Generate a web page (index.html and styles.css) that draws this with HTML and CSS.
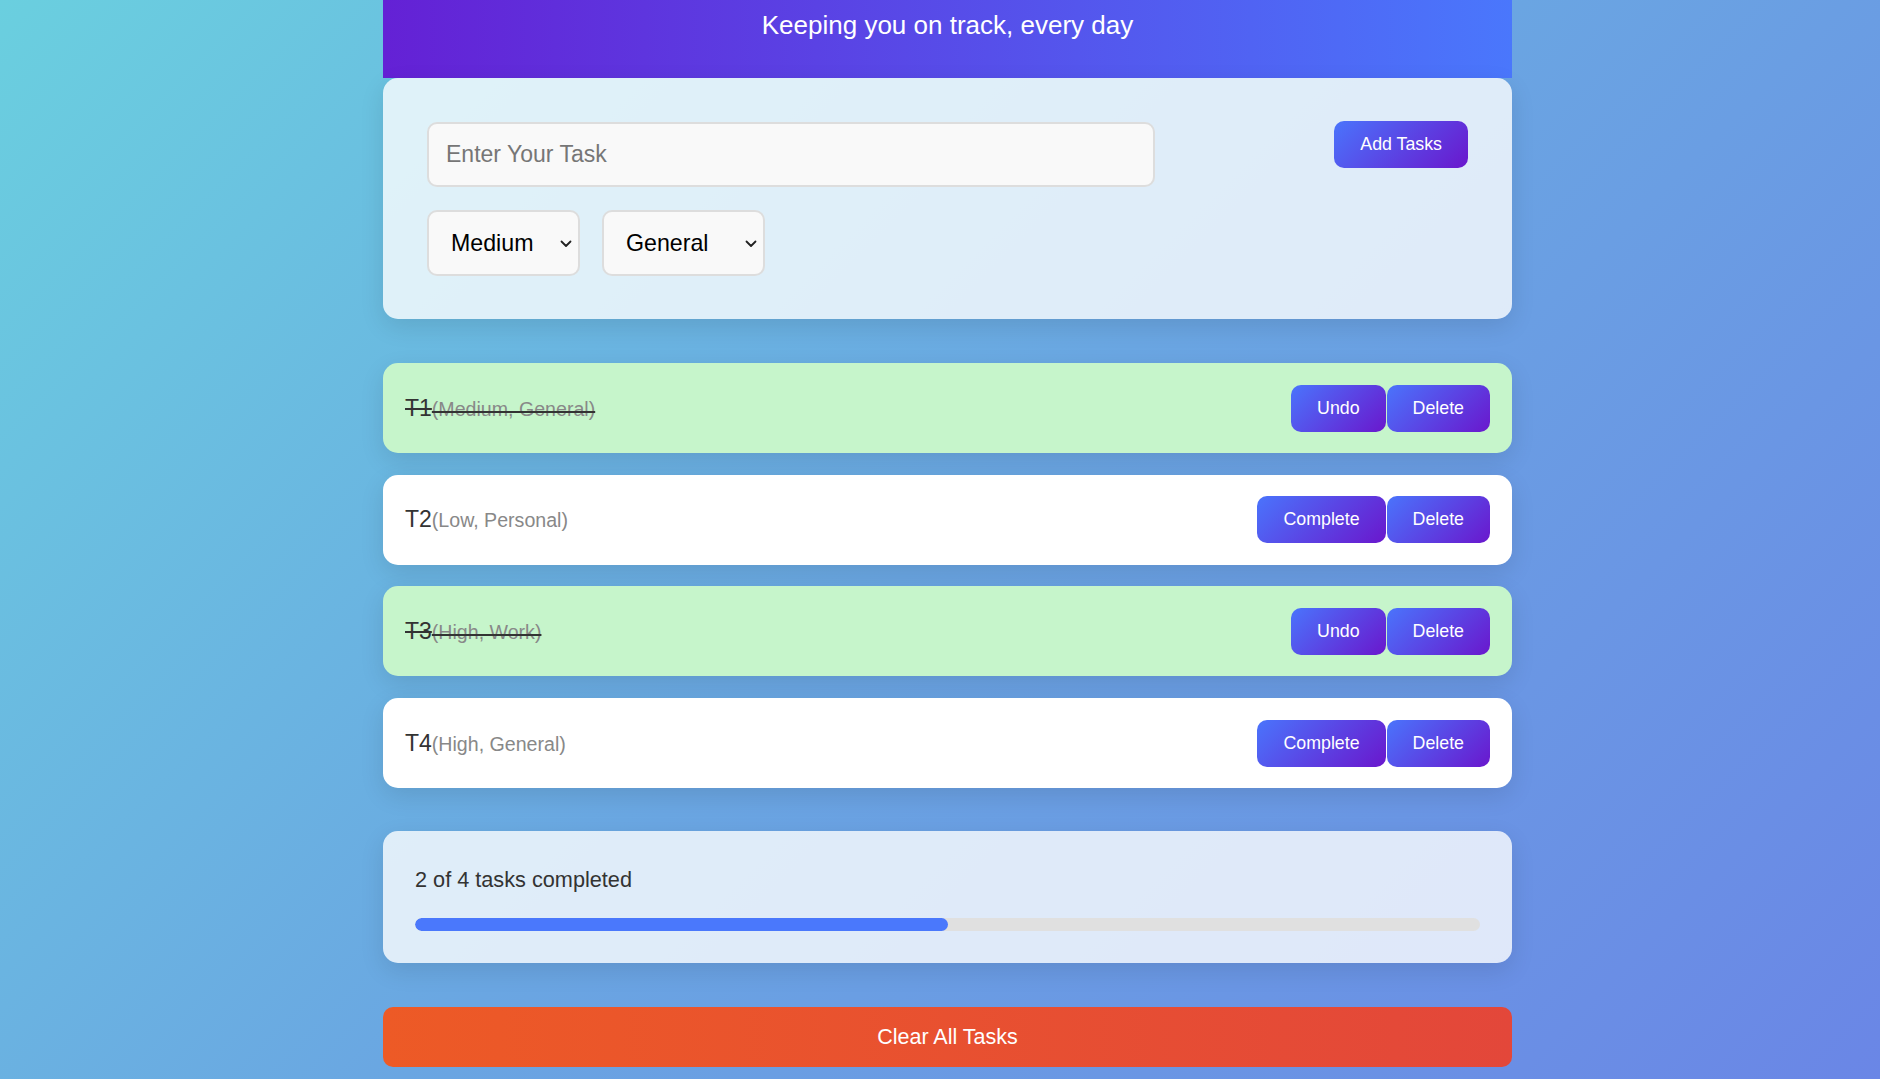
FILE: index.html
```html
<!DOCTYPE html>
<html lang="en">
<head>
<meta charset="utf-8">
<title>Task Tracker</title>
<link rel="stylesheet" href="styles.css">
</head>
<body>
<div class="container">
  <header class="app-header">
    <p class="tagline">Keeping you on track, every day</p>
  </header>

  <section class="card input-card">
    <div class="input-row">
      <input class="task-input" type="text" placeholder="Enter Your Task">
      <button class="btn add-btn">Add Tasks</button>
    </div>
    <div class="select-row">
      <div class="select-wrap">
        <select class="select select-priority">
          <option>Low</option>
          <option selected>Medium</option>
          <option>High</option>
        </select>
        <svg class="chevron" width="12" height="8" viewBox="0 0 12 8" aria-hidden="true"><path d="M1.5 1.5 L6 6 L10.5 1.5" fill="none" stroke="#222" stroke-width="1.8" stroke-linecap="round" stroke-linejoin="round"/></svg>
      </div>
      <div class="select-wrap">
        <select class="select select-category">
          <option selected>General</option>
          <option>Work</option>
          <option>Personal</option>
        </select>
        <svg class="chevron" width="12" height="8" viewBox="0 0 12 8" aria-hidden="true"><path d="M1.5 1.5 L6 6 L10.5 1.5" fill="none" stroke="#222" stroke-width="1.8" stroke-linecap="round" stroke-linejoin="round"/></svg>
      </div>
    </div>
  </section>

  <ul class="task-list">
    <li class="task completed">
      <span class="task-text">T1<span class="task-meta">(Medium, General)</span></span>
      <div class="task-actions"><button class="btn">Undo</button><button class="btn">Delete</button></div>
    </li>
    <li class="task">
      <span class="task-text">T2<span class="task-meta">(Low, Personal)</span></span>
      <div class="task-actions"><button class="btn">Complete</button><button class="btn">Delete</button></div>
    </li>
    <li class="task completed">
      <span class="task-text">T3<span class="task-meta">(High, Work)</span></span>
      <div class="task-actions"><button class="btn">Undo</button><button class="btn">Delete</button></div>
    </li>
    <li class="task">
      <span class="task-text">T4<span class="task-meta">(High, General)</span></span>
      <div class="task-actions"><button class="btn">Complete</button><button class="btn">Delete</button></div>
    </li>
  </ul>

  <section class="card progress-card">
    <p class="progress-text">2 of 4 tasks completed</p>
    <div class="progress-track"><div class="progress-fill" style="width:50%"></div></div>
  </section>

  <button class="clear-btn">Clear All Tasks</button>
</div>
</body>
</html>
```

FILE: styles.css
```css
html {
  min-height: 100%;
  background: linear-gradient(135deg, #6acfdf 0%, #6aa6e2 50%, #6a86e6 100%);
}

body {
  margin: 0;
  padding: 0 0 0 15px;
  font-family: "Liberation Sans", Arial, sans-serif;
  color: #333;
}

.container {
  width: 1129px;
  margin: 0 auto;
}

.app-header {
  background: linear-gradient(90deg, #6421d5 0%, #4a77fc 100%);
  padding: 10px 0 38px;
  text-align: center;
  color: #fff;
}

.tagline {
  margin: 0;
  font-size: 26px;
  line-height: 30px;
}

.card {
  background: rgba(255, 255, 255, 0.79);
  border-radius: 15px;
  box-shadow: 0 8px 24px rgba(0, 0, 0, 0.1);
}

.input-card {
  padding: 44px 44px 43px;
}

.input-row {
  display: flex;
  justify-content: space-between;
  align-items: flex-start;
}

.task-input {
  width: 728px;
  height: 65px;
  box-sizing: border-box;
  border: 2px solid #ddd;
  border-radius: 10px;
  background: #f9f9f9;
  padding: 0 17px;
  font-family: inherit;
  font-size: 23px;
  color: #333;
  outline: none;
}

.task-input::placeholder {
  color: #767676;
}

.btn {
  height: 47px;
  padding: 0 26px;
  border: none;
  border-radius: 10px;
  background: linear-gradient(135deg, #4a74fc 0%, #6a17cd 100%);
  color: #fff;
  font-family: inherit;
  font-size: 17.8px;
  cursor: pointer;
}

.add-btn {
  margin-top: -1px;
}

.select-row {
  display: flex;
  gap: 22px;
  margin-top: 23px;
}

.select-wrap {
  position: relative;
  display: flex;
}

.select {
  appearance: none;
  -webkit-appearance: none;
  height: 66px;
  box-sizing: border-box;
  border: 2px solid #ddd;
  border-radius: 10px;
  background: #f9f9f9;
  padding: 0 24px 0 22px;
  font-family: inherit;
  font-size: 23.2px;
  color: #000;
}

.chevron {
  position: absolute;
  right: 8px;
  top: 50%;
  margin-top: -3px;
  pointer-events: none;
}

.select-priority {
  width: 153px;
}

.select-category {
  width: 163px;
}

.task-list {
  list-style: none;
  margin: 44px 0 0;
  padding: 0;
  display: flex;
  flex-direction: column;
  gap: 21.7px;
}

.task {
  display: flex;
  align-items: center;
  justify-content: space-between;
  height: 90px;
  box-sizing: border-box;
  padding: 0 22px;
  background: #fff;
  border-radius: 15px;
  box-shadow: 0 8px 24px rgba(0, 0, 0, 0.1);
}

.task.completed {
  background: #c6f5cb;
}

.task-text {
  font-size: 23px;
  color: #333;
}

.task.completed .task-text {
  text-decoration: line-through;
}

.task-meta {
  font-size: 19.6px;
  color: #888;
}

.task-actions {
  display: flex;
  gap: 1px;
}

.progress-card {
  margin-top: 43px;
  padding: 36px 32px 32px;
}

.progress-text {
  margin: 0 0 26px;
  font-size: 21.7px;
  line-height: 25px;
  color: #333;
}

.progress-track {
  height: 13px;
  background: #e0e0e0;
  border-radius: 7px;
  overflow: hidden;
}

.progress-fill {
  height: 100%;
  background: #4a78fc;
  border-radius: 7px;
}

.clear-btn {
  display: block;
  width: 100%;
  height: 60px;
  margin-top: 44px;
  border: none;
  border-radius: 10px;
  background: linear-gradient(90deg, #ed5a26 0%, #e3473a 100%);
  color: #fff;
  font-family: inherit;
  font-size: 21.5px;
  cursor: pointer;
}
```
